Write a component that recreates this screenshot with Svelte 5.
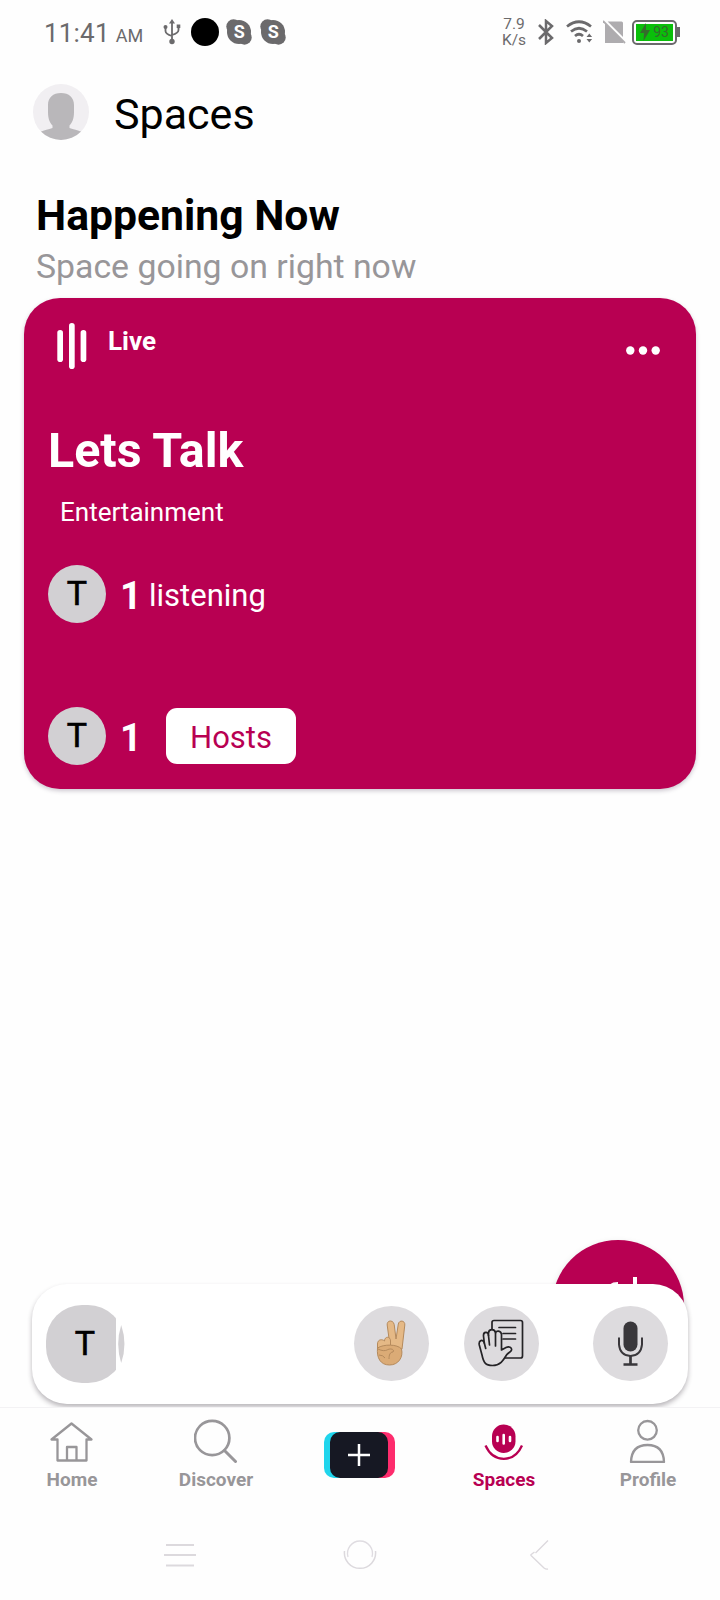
<script>
  let space = {
    title: 'Lets Talk',
    category: 'Entertainment',
    initial: 'T',
    listening: 1,
    hosts: 1
  }

  const tabs = [
    { id: 'home', label: 'Home' },
    { id: 'discover', label: 'Discover' },
    { id: 'create', label: '' },
    { id: 'spaces', label: 'Spaces' },
    { id: 'profile', label: 'Profile' }
  ]

  let active = 'spaces'
</script>

<div class="screen">
  <header class="status">
    <span class="time">11:41</span>
    <span class="ampm">AM</span>
    <svg class="usb" width="18" height="26" viewBox="0 0 18 26" fill="none" stroke="#6b6a6c" stroke-width="1.8">
      <path d="M9 3v19M2.500 8v4q0 3 6.500 5M15.500 8v3q0 3-6.500 5" />
      <path d="M9 0l3 4.500H6z" fill="#6b6a6c" stroke="none" />
      <circle cx="9" cy="22.500" r="2.700" fill="#6b6a6c" stroke="none" />
      <circle cx="2.500" cy="8" r="2" fill="#6b6a6c" stroke="none" />
      <path d="M13.700 5.500h3.600v3.600h-3.600z" fill="#6b6a6c" stroke="none" />
    </svg>
    <span class="dot"></span>
    {#each [0, 1] as n}
      <span class="skype">
        <svg width="26" height="26" viewBox="0 0 26 26" fill="#6b6a6c">
          <circle cx="13" cy="13" r="12" />
          <circle cx="7.500" cy="7.500" r="7.200" />
          <circle cx="18.500" cy="18.500" r="7.200" />
        </svg>
        <b>S</b>
      </span>
    {/each}
    <span class="spacer"></span>
    <div class="speed"><span>7.9</span><span>K/s</span></div>
    <svg class="bt" width="16" height="26" viewBox="0 0 16 26" fill="none" stroke="#6b6a6c" stroke-width="2.500">
      <path d="M1 6l13 13-6 5V2l6 5L1 20" />
    </svg>
    <svg class="wifi" width="27" height="24" viewBox="0 0 27 24" fill="none" stroke="#6b6a6c" stroke-width="2.700">
      <path d="M1 6.500q12-9.500 24 0M5 11.500q8-6.500 16 0M9 16q4-3.500 8 0" />
      <circle cx="13" cy="21" r="2" fill="#6b6a6c" stroke="none" />
      <path d="M20.500 17l2.800-3.500 2.800 3.500zM20.500 19l2.800 3.500 2.800-3.500z" fill="#6b6a6c" stroke="none" />
    </svg>
    <svg class="sim" width="24" height="24" viewBox="0 0 24 24">
      <path d="M5 1.500h13.500q1.500 0 1.500 1.500v20H2V4z" fill="#aeacaf" />
      <path d="M1 0l22 22" stroke="#fefefe" stroke-width="3" />
      <path d="M0 1l22 22" stroke="#aeacaf" stroke-width="1.800" />
    </svg>
    <div class="battery">
      <div class="charge">
        <svg width="10" height="18" viewBox="0 0 10 18"><path d="M6 0L0 10h4L3.500 18 10 7H6z" fill="#356b2c" /></svg>
        <span>93</span>
      </div>
    </div>
    <span class="battery-tip"></span>
  </header>

  <div class="top">
    <svg width="56" height="56" viewBox="0 0 56 56">
      <defs><clipPath id="avatar"><circle cx="28" cy="28" r="28" /></clipPath></defs>
      <g clip-path="url(#avatar)">
        <path d="M0 0h56v56H0z" fill="#f1eff2" />
        <path d="M28 9C20 9 15 13.500 15 21v7c0 7 2 11 4.500 13.500V44c-4 1.500-8 2-12.500 4v8h42v-8c-4.500-2-8.500-2.500-12.500-4v-2.500C39 39 41 35 41 28v-7C41 13.500 36 9 28 9z" fill="#b9b7ba" />
      </g>
    </svg>
    <h1>Spaces</h1>
  </div>

  <section class="heading">
    <h2>Happening Now</h2>
    <p>Space going on right now</p>
  </section>

  <article class="card">
    <div class="card-top">
      <svg width="30" height="46" viewBox="0 0 30 46" fill="#fff">
        <rect x="0.300" y="7" width="5.700" height="32" rx="2.800" />
        <rect x="12" y="0" width="5.700" height="46" rx="2.800" />
        <rect x="23.600" y="7" width="5.700" height="32" rx="2.800" />
      </svg>
      <span class="live">Live</span>
      <svg class="more" width="34" height="9" viewBox="0 0 34 9" fill="#fff">
        <circle cx="4.300" cy="4.500" r="4.200" />
        <circle cx="17" cy="4.500" r="4.200" />
        <circle cx="29.700" cy="4.500" r="4.200" />
      </svg>
    </div>
    <h3>{space.title}</h3>
    <p class="category">{space.category}</p>
    <div class="people">
      <span class="avatar">{space.initial}</span>
      <b>{space.listening}</b>
      <span class="listening">listening</span>
    </div>
    <div class="people hosts">
      <span class="avatar">{space.initial}</span>
      <b>{space.hosts}</b>
      <button class="pill">Hosts</button>
    </div>
  </article>

  <div class="room">
    <div class="fab">
      <svg width="50" height="50" viewBox="0 0 50 50" fill="none" stroke="#fff" stroke-width="4">
        <path d="M34 2v20M24 12h20" />
        <path d="M7 17q1-8 10-8" />
      </svg>
    </div>
    <div class="call-bar">
      <span class="member"><span>{space.initial}</span></span>
      <svg class="next-member" width="7" height="38" viewBox="0 0 7 38"><path d="M3.200 0q6.500 19 0 38-6-19 0-38z" fill="#d2d0d3" /></svg>
      <span class="spacer"></span>
      <button class="round">
        <svg width="75" height="75" viewBox="0 0 75 75" fill="#e5b986" stroke="#b58a5c" stroke-width="1">
          <path d="M36 40L33.200 19c-.5-5 6-5.500 7-.5L42 33l2.300-15c1-4.500 7-3.500 6.500 1L48 43z" />
          <path d="M23.500 43v-5c0-5 5-5 7-3 0-5 6-5 6 0v8z" />
          <path d="M23.500 42c6-4 20-4 24 1 2 8-3 16-12 16s-13-7-12-17z" fill="#dbab76" />
          <path d="M24 43c4 2 7 2 9 1M33 44c3-2 8-1 6 2-3 0-4 3-4 7M25 49q4 0 6 3" fill="none" />
        </svg>
      </button>
      <button class="round notes">
        <svg width="75" height="75" viewBox="0 0 75 75" fill="#dddbde" stroke="#242326" stroke-width="1.700" stroke-linecap="round" stroke-linejoin="round">
          <rect x="28" y="14.500" width="30.500" height="37.500" rx="2" />
          <path d="M35 21.500h16.500M39 27.500h12.500M39 33h12.500" />
          <path d="M18 49L15.300 39c-1-5 3.700-6 5-2l-.8-7c-.3-4.500 4.500-5 5-.5V27c.3-4.500 6.500-4.500 7 0 .5-3 5.500-2.500 6 1.500V44l4.500-2.500c3-1.500 6 0 5.500 2.500-.5 2-3 2.500-5 5-3 5-6 10.500-14 10.500-7 0-9-3-10.500-10.500z" />
          <path d="M20.300 37l1.400 5.500M24.500 29.500l1 9.500M31.500 27.500V40" fill="none" />
        </svg>
      </button>
      <button class="round mic">
        <svg width="75" height="75" viewBox="0 0 75 75" fill="none" stroke="#39373b" stroke-width="2">
          <rect x="30.500" y="15.500" width="14" height="30" rx="7" fill="#39373b" stroke="none" />
          <path d="M26 31.500v7q1 11 11.500 11.500 10.500-.5 11.500-11.500v-7" />
          <path d="M37.500 50v8M30.500 58.500h14" stroke-width="2.700" />
        </svg>
      </button>
    </div>
  </div>

  <nav class="tabs">
    {#each tabs as tab}
      <div class="tab" class:active={tab.id === active}>
        {#if tab.id === 'home'}
          <svg width="44" height="44" viewBox="0 0 44 44" fill="none" stroke="currentColor" stroke-width="2.300" stroke-linejoin="round">
            <path d="M1.500 20.500L21.500 4.500l20 16h-5V41.500h-29v-21z" />
            <path d="M17 41.500V28h9.500v13.500" />
          </svg>
        {:else if tab.id === 'discover'}
          <svg width="44" height="44" viewBox="0 0 44 44" fill="none" stroke="currentColor" stroke-width="2.700" stroke-linecap="round">
            <circle cx="18.200" cy="19" r="17.200" />
            <path d="M30.500 31.500l11 11" stroke-width="3" />
          </svg>
        {:else if tab.id === 'create'}
          <span class="create">
            <svg width="58" height="46" viewBox="0 0 58 46" stroke="#fff" stroke-width="2.500">
              <rect width="58" height="46" rx="10" fill="#161823" stroke="none" />
              <path d="M18 23h22M29 12v22" />
            </svg>
          </span>
        {:else if tab.id === 'spaces'}
          <svg width="44" height="44" viewBox="0 0 44 44">
            <rect x="10" y="5.500" width="23.500" height="28.500" rx="11.700" fill="currentColor" />
            <path d="M3.500 26.500q6 13.300 18.300 13.300t18.200-13.300" fill="none" stroke="currentColor" stroke-width="2.300" />
            <path d="M15.500 18v4M21.700 16v8.500M28 18v4" stroke="#fff" stroke-width="2.600" stroke-linecap="round" />
          </svg>
        {:else}
          <svg width="44" height="44" viewBox="0 0 44 44" fill="none" stroke="currentColor" stroke-width="2.300" stroke-linejoin="round">
            <circle cx="21.500" cy="11.300" r="9.300" />
            <path d="M5 43q.500-17 16.500-17T38 43z" />
          </svg>
        {/if}
        {#if tab.label}<span class="label">{tab.label}</span>{/if}
      </div>
    {/each}
  </nav>

  <!-- white keys with only their soft shadow showing -->
  <footer class="keys">
    <svg width="34" height="32" viewBox="0 0 34 32" stroke="#dcd9dd" stroke-width="1.800"><path d="M3 7h28M1 17h32M3 27.500h28" /></svg>
    <svg width="34" height="32" viewBox="0 0 34 32" fill="none" stroke="#dfdce1">
      <path d="M5 19a12.500 12.500 0 1 1 24 0" stroke-width="1.300" />
      <path d="M1.500 13a15.600 15.600 0 1 0 31 0" stroke="#dcd9dd" stroke-width="1.500" />
    </svg>
    <svg width="34" height="32" viewBox="0 0 34 32" fill="none" stroke="#dcd9dd" stroke-width="1.400"><path d="M25 2.500L12.500 15M7.500 17L21 30q2 1.500 4 1M7.500 17l4-3" /></svg>
  </footer>
</div>

<style>
  :global(body) {
    margin: 0;
    background: #fefefe;
  }

  .screen {
    width: 720px;
    height: 1600px;
    display: flex;
    flex-direction: column;
    overflow: hidden;
    background: #fefefe;
    color: #000;
    font-family: Roboto, sans-serif;
  }

  h1, h2, h3, p {
    margin: 0;
    white-space: nowrap;
  }

  button {
    border: 0;
    padding: 0;
    font-family: inherit;
  }

  .spacer {
    flex: 1;
  }

  .status {
    height: 64px;
    flex: none;
    box-sizing: border-box;
    padding: 0 40px 0 44px;
    display: flex;
    align-items: center;
    color: #6b6a6c;
  }

  .time {
    font-size: 26px;
    line-height: 32px;
    padding-top: 2px;
    letter-spacing: 0.2px;
  }

  .ampm {
    font-size: 18px;
    line-height: 24px;
    padding-top: 8px;
    margin-left: 6px;
  }

  .usb {
    margin-left: 20px;
  }

  .dot {
    width: 28px;
    height: 28px;
    margin: 0 7px 0 10px;
    border-radius: 50%;
    background: #000;
  }

  .skype {
    width: 26px;
    height: 26px;
    display: grid;
    margin-right: 8px;
  }

  .skype > * {
    grid-area: 1 / 1;
  }

  .skype b {
    color: #fff;
    font-size: 18px;
    line-height: 26px;
    text-align: center;
  }

  .speed {
    width: 26px;
    display: flex;
    flex-direction: column;
    text-align: center;
    font-size: 15.500px;
    line-height: 16px;
  }

  .bt {
    margin-left: 11px;
  }

  .wifi {
    margin-left: 12px;
  }

  .sim {
    margin-left: 10px;
  }

  .battery {
    box-sizing: border-box;
    width: 45px;
    height: 25px;
    margin-left: 5px;
    padding: 2px;
    border: 2px solid #6b6a6c;
    border-radius: 5px;
  }

  .charge {
    height: 17px;
    display: flex;
    align-items: center;
    justify-content: center;
    gap: 3px;
    background: #0abf0a;
    color: #356b2c;
    font-size: 14px;
    line-height: 17px;
  }

  .battery-tip {
    width: 3px;
    height: 10px;
    background: #6b6a6c;
  }

  .top {
    display: flex;
    align-items: center;
    height: 56px;
    margin: 20px 0 0 33px;
  }

  .top h1 {
    margin-left: 25px;
    padding-top: 3px;
    font-size: 43px;
    line-height: 50px;
    font-weight: 400;
  }

  .heading {
    margin: 50px 0 0 36px;
  }

  .heading h2 {
    font-size: 42.700px;
    line-height: 50px;
    font-weight: 700;
  }

  .heading p {
    margin-top: 6px;
    color: #989699;
    font-size: 33.800px;
    line-height: 42px;
  }

  .card {
    box-sizing: border-box;
    width: 672px;
    height: 491px;
    flex: none;
    margin: 10px 0 0 24px;
    padding: 25px 36px 0 24px;
    border-radius: 36px;
    background: #b80052;
    box-shadow: 0 2px 4px rgba(60, 40, 70, 0.25);
    color: #fff;
  }

  .card-top {
    display: flex;
    align-items: flex-start;
    height: 46px;
    padding-left: 9px;
  }

  .live {
    margin: 2px 0 0 21px;
    font-size: 26px;
    line-height: 32px;
    font-weight: 700;
  }

  .more {
    margin: 23px 0 0 auto;
  }

  .card h3 {
    margin-top: 54px;
    font-size: 48.400px;
    line-height: 56px;
    font-weight: 700;
  }

  .category {
    margin: 17px 0 0 12px;
    font-size: 26px;
    line-height: 32px;
  }

  .people {
    display: flex;
    align-items: center;
    height: 58px;
    margin-top: 37px;
  }

  .people.hosts {
    margin-top: 84px;
  }

  .avatar {
    width: 58px;
    height: 58px;
    border-radius: 50%;
    background: #d2d0d3;
    color: #000;
    font-size: 34px;
    line-height: 56px;
    -webkit-text-stroke: 0.6px;
    text-align: center;
  }

  .people b {
    width: 22px;
    margin-left: 14px;
    padding-top: 3px;
    font-size: 38px;
    line-height: 44px;
  }

  .listening {
    margin-left: 7px;
    padding-top: 3px;
    font-size: 31px;
    line-height: 38px;
  }

  .pill {
    width: 130px;
    height: 56px;
    margin-left: 24px;
    padding-top: 2px;
    border-radius: 11px;
    background: #fff;
    color: #b80052;
    font-size: 31px;
  }

  .room {
    position: relative;
    height: 123px;
    flex: none;
    margin-top: 495px;
    /* the tab bar cuts the shadow, the button may rise above */
    clip-path: inset(-60px 0 0 0);
  }

  .fab {
    position: absolute;
    left: 552px;
    top: -44px;
    width: 132px;
    height: 132px;
    display: flex;
    align-items: flex-start;
    justify-content: center;
    border-radius: 50%;
    background: #b80052;
    box-shadow: 0 3px 7px rgba(0, 0, 0, 0.15);
  }

  .fab svg {
    margin: 35px 0 0 16px;
  }

  .call-bar {
    position: relative;
    box-sizing: border-box;
    width: 656px;
    height: 120px;
    margin-left: 32px;
    padding: 0 20px 1px 14px;
    display: flex;
    align-items: center;
    border-radius: 35px;
    background: #fff;
    box-shadow: 0 3px 5px rgba(40, 30, 45, 0.32);
  }

  .member {
    width: 70px;
    height: 78px;
    overflow: hidden;
  }

  .member span {
    display: block;
    width: 78px;
    height: 78px;
    border-radius: 36px;
    background: #d2d0d3;
    font-size: 34px;
    line-height: 76px;
    -webkit-text-stroke: 0.6px;
    text-align: center;
  }

  .next-member {
    margin-left: 2px;
  }

  .round {
    width: 75px;
    height: 75px;
    border-radius: 50%;
    background: #dddbde;
  }

  .notes {
    margin-left: 35px;
  }

  .mic {
    margin-left: 54px;
  }

  .tabs {
    display: grid;
    grid-template-columns: repeat(5, 144px);
    height: 109px;
    flex: none;
    border-top: 1px solid #f3f2f4;
  }

  .tab {
    display: flex;
    flex-direction: column;
    align-items: center;
    padding-top: 11px;
    color: #989699;
  }

  .tab.active {
    color: #b80052;
  }

  .label {
    margin-top: 5px;
    font-size: 19px;
    line-height: 24px;
    font-weight: 700;
  }

  .create {
    box-sizing: border-box;
    width: 71px;
    height: 46px;
    margin: 13px 2px 0 0;
    padding-left: 6px;
    border-radius: 10px;
    background: linear-gradient(90deg, #20d5ec 50%, #fe2c6d 50%);
  }

  .create svg {
    display: block;
  }

  .keys {
    display: flex;
    justify-content: center;
    gap: 146px;
    padding-top: 21px;
  }
</style>
